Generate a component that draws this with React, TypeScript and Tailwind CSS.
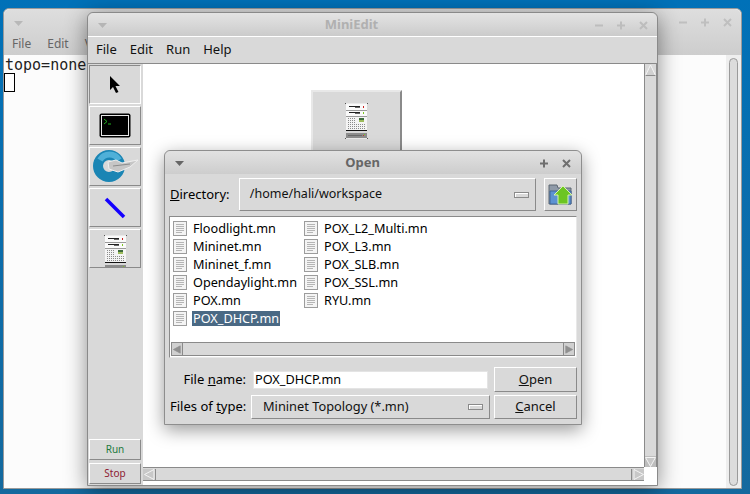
const sans = "font-['Noto_Sans',sans-serif]";

function ServerIcon() {
  return (
    <svg width="23" height="36" viewBox="0 0 23 36" shapeRendering="crispEdges" className="block">
      <rect x="1" y="0" width="21" height="36" fill="#e9e9e9" />
      <rect x="1" y="1" width="21" height="6" fill="#fafafa" />
      <rect x="1" y="7" width="21" height="1" fill="#9a9a9a" />
      <rect x="1" y="8" width="21" height="5" fill="#fafafa" />
      <rect x="1" y="13" width="21" height="1" fill="#9a9a9a" />
      <rect x="1" y="14" width="21" height="13" fill="#f4f4f4" />
      <rect x="4" y="3" width="11" height="1" fill="#222" />
      <rect x="10" y="4" width="5" height="1" fill="#666" />
      <rect x="18" y="3" width="1" height="2" fill="#c81e1e" />
      <rect x="4" y="9" width="11" height="1" fill="#222" />
      <rect x="10" y="10" width="5" height="1" fill="#666" />
      <rect x="18" y="9" width="1" height="2" fill="#7cc520" />
      {[15, 17, 19, 21, 23, 25].map((y, r) =>
        [3, 5, 7, 9, 11, 13, 15, 17, 19].map((x, c) =>
          (r < 3 && c > 3) ? null : <rect key={`${y}-${x}`} x={x} y={y} width="1" height="1" fill="#8b8b8b" />
        )
      )}
      <rect x="14" y="15" width="5" height="2" fill="#3d6b3d" />
      <rect x="14" y="17" width="5" height="2" fill="#9dbb5c" />
      <rect x="1" y="27" width="21" height="1" fill="#111" />
      <rect x="1" y="28" width="21" height="2" fill="#d8d8d8" />
      <rect x="1" y="30" width="21" height="5" fill="#8c8c8c" />
      <rect x="3" y="32" width="14" height="1" fill="#6a6a6a" />
      <rect x="18" y="32" width="1" height="1" fill="#c0392b" />
      <rect x="19" y="31" width="1" height="1" fill="#7cc520" />
      <rect x="0" y="0" width="1" height="1" fill="#555" />
      <rect x="22" y="0" width="1" height="1" fill="#555" />
      <rect x="0" y="35" width="1" height="1" fill="#555" />
      <rect x="22" y="35" width="1" height="1" fill="#555" />
    </svg>
  );
}

function FileIcon() {
  return (
    <svg width="14" height="15" viewBox="0 0 14 15" className="block shrink-0" shapeRendering="crispEdges">
      <rect x="0.5" y="0.5" width="13" height="14" rx="1" fill="#f4f4f4" stroke="#9c9c9c" />
      {[3, 5, 7, 9, 11].map((y) => (
        <rect key={y} x="3" y={y} width={y === 11 ? 6 : 8} height="1" fill="#b5b5b5" />
      ))}
    </svg>
  );
}

function Tool({ children, sunken }: { children: React.ReactNode; sunken?: boolean }) {
  return (
    <div
      className={`w-[52px] h-[39px] flex items-center justify-center bg-[#d9d9d9] border overflow-hidden ${
        sunken
          ? "border-t-[#8a8a8a] border-l-[#8a8a8a] border-r-white border-b-white"
          : "border-t-white border-l-white border-r-[#8a8a8a] border-b-[#8a8a8a]"
      }`}
    >
      {children}
    </div>
  );
}

function Raised({ className, children }: { className: string; children?: React.ReactNode }) {
  return (
    <div className={`bg-[#d9d9d9] border border-t-white border-l-white border-r-[#8a8a8a] border-b-[#8a8a8a] ${className}`}>
      {children}
    </div>
  );
}

function TitleButtons({ color }: { color: string }) {
  return (
    <svg width="53" height="11" viewBox="0 0 53 11" className="block shrink-0">
      <g stroke={color} strokeWidth="2" fill="none">
        <path d="M0 5.5H8" />
        <path d="M22 5.5H30M26 1.5V9.5" />
        <path d="M45 2L52 9M52 2L45 9" />
      </g>
    </svg>
  );
}

function DialogButtons() {
  return (
    <svg width="31" height="11" viewBox="0 0 31 11" className="block shrink-0">
      <g stroke="#6f6f6f" strokeWidth="2" fill="none">
        <path d="M0 5.5H8M4 1.5V9.5" />
        <path d="M23 2L30 9M30 2L23 9" />
      </g>
    </svg>
  );
}

function MenuArrow({ color }: { color: string }) {
  return (
    <svg width="9" height="5" viewBox="0 0 9 5" className="block">
      <path d="M0 0H9L4.5 5Z" fill={color} />
    </svg>
  );
}

function ComboMark() {
  return <div className="w-[15px] h-[6px] bg-[#d9d9d9] border border-[#8a8a8a] shadow-[inset_1px_1px_0_#fff]" />;
}

function TriUp() {
  return (
    <svg width="11" height="12" viewBox="0 0 11 12" className="block">
      <path d="M5.5 1L10.5 11.5H0.5Z" fill="#d0d0d0" stroke="#f4f4f4" strokeWidth="1" />
      <path d="M10.5 11.5H0.5" stroke="#8a8a8a" />
    </svg>
  );
}
function TriDown() {
  return (
    <svg width="11" height="10" viewBox="0 0 11 10" className="block">
      <path d="M0.5 0.5H10.5L5.5 9.5Z" fill="#c8c8c8" stroke="#f4f4f4" strokeWidth="1" />
    </svg>
  );
}
function TriLeft({ size = 11, fill = "#c8c8c8", stroke = "#f4f4f4" }: { size?: number; fill?: string; stroke?: string }) {
  return (
    <svg width={size} height="11" viewBox="0 0 11 11" className="block">
      <path d="M10 0.5V10.5L0.5 5.5Z" fill={fill} stroke={stroke} strokeWidth="1" />
    </svg>
  );
}
function TriRight({ size = 11, fill = "#c8c8c8", stroke = "#f4f4f4" }: { size?: number; fill?: string; stroke?: string }) {
  return (
    <svg width={size} height="11" viewBox="0 0 11 11" className="block">
      <path d="M1 0.5V10.5L10.5 5.5Z" fill={fill} stroke={stroke} strokeWidth="1" />
    </svg>
  );
}

const leftFiles = ["Floodlight.mn", "Mininet.mn", "Mininet_f.mn", "Opendaylight.mn", "POX.mn", "POX_DHCP.mn"];
const rightFiles = ["POX_L2_Multi.mn", "POX_L3.mn", "POX_SLB.mn", "POX_SSL.mn", "RYU.mn"];

function FileRow({ name, selected }: { name: string; selected?: boolean }) {
  return (
    <div className="h-[18px] flex items-center gap-[5px]">
      <FileIcon />
      <span className={`text-[12.7px] leading-[15px] px-px whitespace-nowrap ${selected ? "bg-[#4a6984] text-white" : "text-black"}`}>{name}</span>
    </div>
  );
}

function OpenDialog() {
  return (
    <div className={`absolute left-[164px] top-[150px] w-[418px] h-[275px] bg-[#d9d9d9] border border-[#8e8e8e] rounded-t-[6px] shadow-[0_5px_18px_rgba(0,0,0,0.4)] flex flex-col ${sans}`}>
      <div className="relative h-[23px] shrink-0 rounded-t-[6px] bg-gradient-to-b from-[#e2e2e2] to-[#cdcdcd] flex items-center justify-center">
        <div className="absolute left-[10px] top-[10px]"><MenuArrow color="#666" /></div>
        <span className="text-[13px] font-bold text-[#666] mr-[21px]">Open</span>
        <div className="absolute right-[10px] top-[7px]"><DialogButtons /></div>
      </div>
      <div className="flex items-stretch h-[33px] mt-[4px] pl-[5px] pr-[4px]">
        <span className="w-[69px] text-[13px] text-black self-center"><span className="underline">D</span>irectory:</span>
        <Raised className="w-[298px] flex items-center justify-between pl-[10px] pr-[6px]">
          <span className="text-[12.5px] text-[#111]">/home/hali/workspace</span>
          <ComboMark />
        </Raised>
        <Raised className="ml-[8px] w-[33px] flex items-center justify-center">
          <svg width="25" height="22" viewBox="0 0 25 22">
            <path d="M1 1H9L10 4H23V20H1Z" fill="#8f9aa8" stroke="#5c6670" />
            <path d="M2 7H23V20H2Z" fill="#5c92d2" stroke="#3f6596" />
            <path d="M15 2L24 11H20V20H10V11H6Z" fill="#6cc522" stroke="#d8f2b0" />
          </svg>
        </Raised>
      </div>
      <div className="mt-[5px] mx-[4px] h-[142px] bg-white border border-t-[#8a8a8a] border-l-[#8a8a8a] border-r-[#e8e8e8] border-b-[#e8e8e8] flex flex-col">
        <div className="flex-1 flex pl-[3px] pt-[2px]">
          <div className="w-[131px] flex flex-col">
            {leftFiles.map((f) => <FileRow key={f} name={f} selected={f === "POX_DHCP.mn"} />)}
          </div>
          <div className="flex flex-col">
            {rightFiles.map((f) => <FileRow key={f} name={f} />)}
          </div>
        </div>
        <div className="mx-px mb-px h-[14px] bg-[#d9d9d9] border border-[#8a8a8a] flex items-center justify-between">
          <div className="w-[11px] h-[12px] flex items-center justify-center border-r border-[#8a8a8a] bg-[#d0d0d0]"><TriLeft size={8} fill="#8f8f8f" stroke="#8f8f8f" /></div>
          <div className="w-[11px] h-[12px] flex items-center justify-center border-l border-[#8a8a8a] bg-[#d0d0d0]"><TriRight size={8} fill="#8f8f8f" stroke="#8f8f8f" /></div>
        </div>
      </div>
      <div className="flex items-center h-[25px] mt-[9px] pr-[4px]">
        <span className="w-[81px] text-right text-[13px] text-black">File <span className="underline">n</span>ame:</span>
        <div className="ml-[7px] w-[235px] h-[18px] bg-white border border-[#e4e4e4] flex items-center pl-[1px] text-[12.7px] text-black">POX_DHCP.mn</div>
        <Raised className="ml-[6px] w-[83px] h-[25px] flex items-center justify-center text-[13px] text-[#111]">
          <span><span className="underline">O</span>pen</span>
        </Raised>
      </div>
      <div className="flex items-center h-[24px] mt-[3px] pl-[5px] pr-[4px]">
        <span className="w-[76px] text-right text-[13px] text-black whitespace-nowrap">Files of <span className="underline">t</span>ype:</span>
        <Raised className="ml-[5px] w-[239px] h-[24px] flex items-center justify-between pl-[11px] pr-[6px]">
          <span className="text-[12.8px] text-[#111]">Mininet Topology (*.mn)</span>
          <ComboMark />
        </Raised>
        <Raised className="ml-[4px] w-[83px] h-[24px] flex items-center justify-center text-[13px] text-[#111]">
          <span><span className="underline">C</span>ancel</span>
        </Raised>
      </div>
    </div>
  );
}

function MiniEdit() {
  return (
    <div className={`absolute left-[87px] top-[12px] w-[571px] h-[474px] bg-[#d9d9d9] border border-[#8a8a8a] rounded-t-[6px] shadow-[0_4px_22px_rgba(0,0,0,0.45)] flex flex-col ${sans}`}>
      <div className="relative h-[23px] shrink-0 rounded-t-[6px] bg-gradient-to-b from-[#e4e4e4] to-[#cbcbcb] border-b border-white box-content flex items-center justify-center">
        <div className="absolute left-[10px] top-[10px]"><MenuArrow color="#b5b5b5" /></div>
        <span className="text-[13px] font-bold text-[#b0b0b0] mr-[42px]">MiniEdit</span>
        <div className="absolute right-[9px] top-[7px]"><TitleButtons color="#bdbdbd" /></div>
      </div>
      <div className="h-[27px] shrink-0 flex items-center gap-[13px] pl-[8px] border-b border-[#8a8a8a] text-[13px] text-[#111]">
        <span>File</span><span>Edit</span><span>Run</span><span>Help</span>
      </div>
      <div className="flex-1 flex min-h-0">
        <div className="w-[55px] shrink-0 flex flex-col gap-[2px] pl-[1px] pt-[1px] pb-[1px]">
          <Tool sunken>
            <svg width="14" height="18" viewBox="0 0 14 18"><path d="M2 0V14L5 11L8 17L10.5 16L7.5 10H12Z" fill="#000" /></svg>
          </Tool>
          <Tool>
            <svg width="32" height="25" viewBox="0 0 32 25">
              <rect x="0.5" y="0.5" width="31" height="24" rx="2" fill="#000" />
              <rect x="2.5" y="2.5" width="27" height="20" fill="#000" stroke="#e8e8e8" />
              <path d="M5 6L8 8.5L5 11" stroke="#1fb11f" fill="none" />
              <path d="M9 11H12" stroke="#1fb11f" />
            </svg>
          </Tool>
          <Tool>
            <svg width="46" height="36" viewBox="0 0 46 36">
              <circle cx="17" cy="17" r="11" fill="none" stroke="#1a85b4" strokeWidth="10" />
              <path d="M8 11A11 11 0 0 1 27 11" fill="none" stroke="#4fb0d8" strokeWidth="6" />
              <path d="M16 13L24 11L30 14L46 11L38 18L26 23L17 20Z" fill="#c6c6c6" stroke="#efefef" />
              <path d="M21 17L38 15" stroke="#8c8c8c" />
            </svg>
          </Tool>
          <Tool>
            <svg width="22" height="22" viewBox="0 0 22 22"><path d="M2 2L20 20" stroke="#1400ff" strokeWidth="3.5" /></svg>
          </Tool>
          <Tool>
            <div className="mt-[5px] h-[33px] overflow-hidden"><ServerIcon /></div>
          </Tool>
          <div className="flex-1" />
          <Raised className="w-[52px] h-[21px] flex items-center justify-center text-[10px] text-[#1e7a3e]">Run</Raised>
          <Raised className="w-[52px] h-[21px] mt-[1px] flex items-center justify-center text-[10px] text-[#8e2032]">Stop</Raised>
        </div>
        <div className="flex-1 flex flex-col min-w-0">
          <div className="flex-1 flex min-h-0">
            <div className="flex-1 bg-white relative min-w-0">
              <div className="absolute left-[168px] top-[26px] w-[91px] h-[68px] bg-[#d9d9d9] border-2 border-t-[#e8e8e8] border-l-[#e8e8e8] border-r-[#8a8a8a] border-b-transparent flex justify-center pt-[11px]">
                <ServerIcon />
              </div>
            </div>
            <div className="w-[13px] shrink-0 bg-[#d9d9d9] border-x border-[#8a8a8a] flex flex-col items-center justify-between">
              <TriUp />
              <div className="bg-[#bdbdbd] w-full flex justify-center pt-px"><TriDown /></div>
            </div>
          </div>
          <div className="h-[18px] shrink-0 flex bg-white">
            <div className="flex-1 bg-[#d9d9d9] border-b border-b-[#8a8a8a] pt-[1px] mb-[4px] border-t border-t-[#8a8a8a] flex justify-between items-center">
              <div className="w-[13px] h-full flex items-center justify-center border-r border-[#8a8a8a] bg-[#c8c8c8]"><TriLeft /></div>
              <div className="w-[13px] h-full flex items-center justify-center border-l border-[#8a8a8a] bg-[#c8c8c8]"><TriRight /></div>
            </div>
            <div className="w-[13px] shrink-0" />
          </div>
        </div>
      </div>
    </div>
  );
}

export default function App() {
  return (
    <div className={`relative w-[750px] h-[494px] overflow-hidden bg-gradient-to-b from-[#0071b8] to-[#14699e] ${sans}`}>
      <div className="absolute left-[3px] top-[8px] w-[739px] h-[481px] bg-[#fcfcfc] border border-[#9a9a9a] rounded-t-[6px] flex flex-col">
        <div className="h-[46px] shrink-0 rounded-t-[6px] bg-gradient-to-b from-[#dedede] to-[#cdcdcd] flex flex-col">
          <div className="relative h-[23px] shrink-0">
            <div className="absolute left-[10px] top-[12px]"><MenuArrow color="#b8b8b8" /></div>
            <div className="absolute right-[9px] top-[8px]"><TitleButtons color="#bfbfbf" /></div>
          </div>
          <div className="flex-1 flex items-center gap-[16px] pl-[8px] text-[12px] text-[#666]">
            <span>File</span><span>Edit</span><span>V</span>
          </div>
        </div>
        <div className="flex-1 flex min-h-0">
          <div className="flex-1 flex flex-col items-start font-['DejaVu_Sans_Mono',monospace] text-[15px] leading-[17px] text-[#222] pt-[2px]">
            <span className="pl-px">topo=none</span>
            <div className="w-[11px] h-[19px] mt-[-1px] border border-black bg-white" />
          </div>
          <div className="w-[15px] bg-[#eeeeee] flex justify-center pt-[3px] pb-[2px]">
            <div className="w-[9px] bg-[#dcdcdc] border border-[#9a9a9a] rounded-full" />
          </div>
        </div>
      </div>
      <MiniEdit />
      <OpenDialog />
    </div>
  );
}
